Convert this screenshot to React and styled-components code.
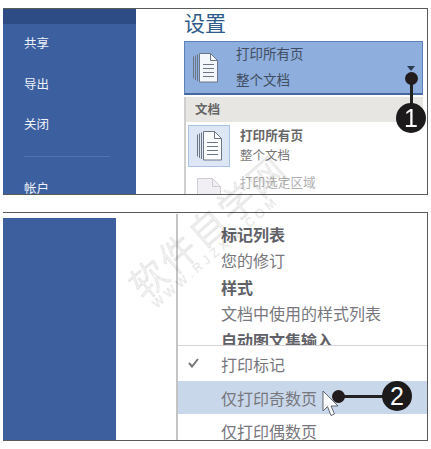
import React from 'react'
import styled, { createGlobalStyle } from 'styled-components'

const GlobalStyle = createGlobalStyle`
  html, body {
    margin: 0;
    padding: 0;
    background: #fff;
    font-family: "Noto Sans CJK SC", "Liberation Sans", sans-serif;
  }
`

const Page = styled.div`
  position: relative;
  width: 431px;
  height: 449px;
  overflow: hidden;
  padding: 8px 3px 0 3px;
  box-sizing: border-box;
  display: flex;
  flex-direction: column;
  gap: 17px;
  filter: blur(0.45px);
`

const Shot = styled.div`
  position: relative;
  width: 425px;
  height: ${p => p.$height}px;
  flex: none;
  box-sizing: border-box;
  border-top: 1px solid #5a5a5a;
  border-bottom: 1px solid #5a5a5a;
  border-right: 1px solid #5a5a5a;
  display: flex;
  overflow: hidden;
  background: #fff;
`

const Sidebar = styled.div`
  width: 133px;
  flex: none;
  background: #3c5fa0;
  display: flex;
  flex-direction: column;
`

const SideTop = styled.div`
  height: 15px;
  flex: none;
  background: #2d4b85;
`

const SideItem = styled.div`
  flex: none;
  color: #eef2f9;
  font-size: 12.5px;
  line-height: 18px;
  margin: ${p => p.$top}px 0 0 21px;
`

const SideRule = styled.div`
  flex: none;
  width: 86px;
  height: 1px;
  background: #5273b0;
  margin: 23px 0 0 21px;
`

const Settings = styled.div`
  margin-left: 48px;
  width: 239px;
  flex: none;
  display: flex;
  flex-direction: column;
`

const Title = styled.div`
  height: 32px;
  flex: none;
  font-size: 21px;
  line-height: 27px;
  color: #2f5b8a;
`

const Picker = styled.div`
  position: relative;
  height: 54px;
  flex: none;
  box-sizing: border-box;
  background: #8eaedd;
  border: 1px solid #5d82b8;
  border-bottom: 2px solid #46689c;
  display: flex;
  align-items: center;
  padding-left: 7px;
  gap: 17px;
`

const PickerText = styled.div`
  display: flex;
  flex-direction: column;
  gap: 8px;
  padding-bottom: 4px;
  color: #414d60;
  font-size: 13.5px;
  line-height: 18px;
`

const Caret = styled.div`
  position: absolute;
  right: 7px;
  top: 24px;
  width: 0;
  height: 0;
  border-left: 4px solid transparent;
  border-right: 4px solid transparent;
  border-top: 5px solid #2d3b52;
`

const Dropdown = styled.div`
  flex: 1;
  min-height: 0;
  margin-top: 2px;
  border-left: 2px solid #cfcfcf;
`

const GroupHead = styled.div`
  height: 25px;
  background: #e8e6e2;
  padding-left: 9px;
  font-size: 12.5px;
  font-weight: 700;
  line-height: 23px;
  color: #666;
`

const Option = styled.div`
  display: flex;
  margin: ${p => p.$top}px 0 0 2px;
  gap: 10px;
`

const IconBox = styled.div`
  width: 42px;
  height: 42px;
  flex: none;
  box-sizing: border-box;
  display: flex;
  align-items: center;
  justify-content: center;
  background: ${p => (p.$active ? '#dce6f4' : 'transparent')};
  border: 1px solid ${p => (p.$active ? '#a9c3e5' : 'transparent')};
`

const OptionText = styled.div`
  display: flex;
  flex-direction: column;
  gap: 2px;
  padding-top: 1px;
`

const OptionName = styled.div`
  font-size: 12.6px;
  line-height: 18px;
  font-weight: ${p => (p.$muted ? 400 : 700)};
  color: ${p => (p.$muted ? '#b0b0b0' : '#666')};
`

const OptionNote = styled.div`
  font-size: 12.5px;
  line-height: 18px;
  color: #777;
`

const BlueBlock = styled.div`
  width: 113px;
  flex: none;
  margin-top: 5px;
  background: #3e5f9e;
`

const Menu = styled.div`
  margin-left: 60px;
  flex: 1;
  min-width: 0;
  border-left: 2px solid #c4c4c4;
  margin-top: 1px;
  display: flex;
  flex-direction: column;
`

const ListArea = styled.div`
  height: 132px;
  flex: none;
  overflow: hidden;
  box-sizing: border-box;
  padding: 7px 0 0 43px;
  border-bottom: 1px solid #d6d6d6;
`

const ListLine = styled.div`
  font-size: 16px;
  line-height: 26.4px;
  white-space: nowrap;
  font-weight: ${p => (p.$head ? 700 : 400)};
  color: ${p => (p.$head ? '#606167' : '#77777d')};
`

const MenuItem = styled.div`
  height: ${p => p.$height}px;
  flex: none;
  display: flex;
  align-items: center;
  padding-left: 43px;
  position: relative;
  font-size: 16px;
  color: #77777d;
  background: ${p => (p.$hover ? '#c9d7ea' : 'transparent')};
`

const Check = styled.svg`
  position: absolute;
  left: 10px;
  top: 12px;
`

const Leader = styled.div`
  position: absolute;
  background: #222;
  ${p => (p.$vertical
    ? `left: ${p.$x - 1}px; top: ${p.$y}px; width: 3px; height: ${p.$len}px;`
    : `left: ${p.$x}px; top: ${p.$y - 1}px; height: 3px; width: ${p.$len}px;`)}
`

const Dot = styled.div`
  position: absolute;
  left: ${p => p.$x - 6}px;
  top: ${p => p.$y - 6}px;
  width: 13px;
  height: 13px;
  border-radius: 50%;
  background: #231c1e;
`

const Badge = styled.div`
  position: absolute;
  left: ${p => p.$x - 15}px;
  top: ${p => p.$y - 15}px;
  width: 30px;
  height: 30px;
  border-radius: 50%;
  background: #1c1a1b;
  color: #fff;
  font-family: "Liberation Sans", sans-serif;
  font-size: 25px;
  line-height: 30px;
  text-align: center;
`

const Cursor = styled.svg`
  position: absolute;
  left: 322px;
  top: 390px;
`

const Watermark = styled.div`
  position: absolute;
  left: 121px;
  top: 275px;
  transform: rotate(-41deg);
  transform-origin: 0 0;
  pointer-events: none;
  white-space: nowrap;
  mix-blend-mode: multiply;
  display: flex;
  flex-direction: column;
  align-items: flex-start;
`

const MarkBig = styled.div`
  font-size: 36px;
  line-height: 38px;
  letter-spacing: 3px;
  font-weight: 300;
  color: #fff;
  -webkit-text-stroke: 0.8px #dcdcdc;
`

const MarkSmall = styled.div`
  font-family: "Liberation Sans", sans-serif;
  font-size: 12px;
  line-height: 14px;
  letter-spacing: 4.2px;
  margin-left: 5px;
  color: #e2e2e2;
`

const PagesIcon = () => (
  <svg width="27" height="32" viewBox="0 0 27 32" fill="none" stroke="#6d7684" strokeWidth="1">
    <path d="M1.500 4.500v22M3.500 3.500v24.500M5.500 2.500v26.500" />
    <path d="M7.500 1.500h11l7 7v21.500h-18z" fill="#fff" fillOpacity="0.9" />
    <path d="M18.500 1.500v7h7" />
    <path d="M11 12.500h11M11 16.500h11M11 20.500h11M11 24.500h11" />
  </svg>
)

const FadedPageIcon = () => (
  <svg width="26" height="32" viewBox="0 0 26 32" fill="none" stroke="#cfccd2" strokeWidth="1">
    <path d="M1.500 1.500h15l8 8v21h-23z" fill="#f1eff3" />
    <path d="M16.500 1.500v8h8" />
    <path d="M5 22.500h16M5 26.500h16M8 19v10M13 19v10M18 19v10" stroke="#bdbac2" strokeDasharray="2 1" />
  </svg>
)

export default function App() {
  return (
    <Page>
      <GlobalStyle />
      <Shot $height={187}>
        <Sidebar>
          <SideTop />
          <SideItem $top={10}>共享</SideItem>
          <SideItem $top={23}>导出</SideItem>
          <SideItem $top={22}>关闭</SideItem>
          <SideRule />
          <SideItem $top={22}>帐户</SideItem>
        </Sidebar>
        <Settings>
          <Title>设置</Title>
          <Picker>
            <PagesIcon />
            <PickerText>
              <span>打印所有页</span>
              <span>整个文档</span>
            </PickerText>
            <Caret />
          </Picker>
          <Dropdown>
            <GroupHead>文档</GroupHead>
            <Option $top={3}>
              <IconBox $active>
                <PagesIcon />
              </IconBox>
              <OptionText>
                <OptionName>打印所有页</OptionName>
                <OptionNote>整个文档</OptionNote>
              </OptionText>
            </Option>
            <Option $top={5}>
              <IconBox>
                <FadedPageIcon />
              </IconBox>
              <OptionText>
                <OptionName $muted>打印选定区域</OptionName>
              </OptionText>
            </Option>
          </Dropdown>
        </Settings>
      </Shot>
      <Shot $height={229}>
        <BlueBlock />
        <Menu>
          <ListArea>
            <ListLine $head>标记列表</ListLine>
            <ListLine>您的修订</ListLine>
            <ListLine $head>样式</ListLine>
            <ListLine>文档中使用的样式列表</ListLine>
            <ListLine $head>自动图文集输入</ListLine>
          </ListArea>
          <MenuItem $height={35}>
            <Check width="11" height="10" viewBox="0 0 11 10" fill="none" stroke="#777" strokeWidth="2">
              <path d="M1 5l3 3.500 6-7.500" />
            </Check>
            打印标记
          </MenuItem>
          <MenuItem $height={33} $hover>仅打印奇数页</MenuItem>
          <MenuItem $height={33}>仅打印偶数页</MenuItem>
        </Menu>
      </Shot>

      <Leader $vertical $x={411} $y={78} $len={30} />
      <Dot $x={411} $y={78} />
      <Badge $x={411} $y={118}>1</Badge>

      <Cursor width="18" height="27" viewBox="0 0 18 27">
        <path d="M1 1v20l4.500-4.500 3.500 9 3.500-1.500-3.500-8h7z" fill="#fff" stroke="#5f6670" strokeWidth="1" />
      </Cursor>
      <Leader $x={338} $y={396} $len={50} />
      <Dot $x={338} $y={396} />
      <Badge $x={397} $y={396}>2</Badge>

      <Watermark>
        <MarkBig>软件自学网</MarkBig>
        <MarkSmall>WWW.RJZXW.COM</MarkSmall>
      </Watermark>
    </Page>
  )
}
